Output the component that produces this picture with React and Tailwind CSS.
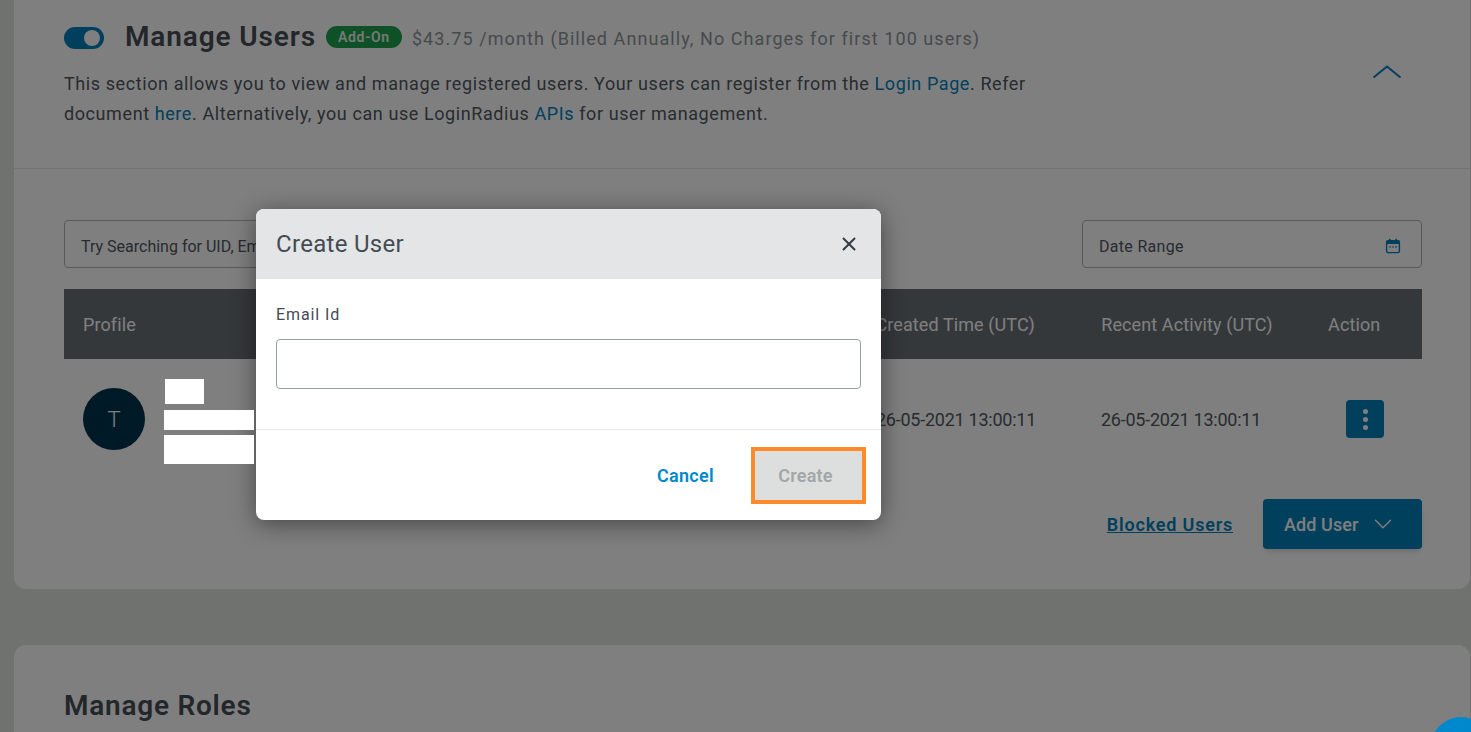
import React from 'react';
import { ChevronDown, X } from 'lucide-react';

const columns = [
  { label: 'Profile', width: 'w-[793px]' },
  { label: 'Created Time (UTC)', width: 'w-[226px]' },
  { label: 'Recent Activity (UTC)', width: 'w-[227px]' },
  { label: 'Action', width: 'w-[94px]' },
];

const CalendarIcon = () => (
  <svg width="16" height="16" viewBox="0 0 16 16" fill="none" className="mt-[4px] text-[#0080bb]">
    <rect x="1.6" y="2.6" width="12.8" height="12" rx="1.5" stroke="currentColor" strokeWidth="1.4" />
    <rect x="1.6" y="2.6" width="12.8" height="3.4" fill="currentColor" />
    <rect x="4" y="0.8" width="1.6" height="3" fill="currentColor" />
    <rect x="10.4" y="0.8" width="1.6" height="3" fill="currentColor" />
    <rect x="4.4" y="8.2" width="1.4" height="1.4" fill="currentColor" />
    <rect x="7.3" y="8.2" width="1.4" height="1.4" fill="currentColor" />
    <rect x="10.2" y="8.2" width="1.4" height="1.4" fill="currentColor" />
  </svg>
);

const UsersCard = () => (
  <div className="h-[589px] rounded-b-xl bg-white">
    <div className="h-[169px] border-b border-[#e6e6e6] pl-[50px] pr-[68px] pt-[20px]">
      <div className="flex h-[34px] items-center">
        <div className="mt-[2px] flex h-[22px] w-[40px] items-center justify-end rounded-full bg-[#0080bb] pr-[4px]">
          <span className="h-[16px] w-[16px] rounded-full bg-white" />
        </div>
        <h2 className="ml-[21px] text-[28px] font-semibold tracking-[0.87px] text-[#464e56]">Manage Users</h2>
        <span className="ml-[10px] flex h-[22px] w-[76px] items-center justify-center rounded-full bg-[#1ca34c] text-[14px] font-semibold tracking-[0.7px] text-[#f0f0f0]">
          Add-On
        </span>
        <span className="ml-[10px] mt-[2px] text-[18px] tracking-[1.07px] text-[#8f959a]">
          $43.75 /month (Billed Annually, No Charges for first 100 users)
        </span>
      </div>
      <div className="mt-[15px] flex justify-between">
        <p className="w-[980px] text-[18px] leading-[30px] tracking-[0.59px] text-[#50585f]">
          This section allows you to view and manage registered users. Your users can register from the{' '}
          <a className="text-[#0080bb]">Login Page</a>. Refer document <a className="text-[#0080bb]">here</a>.
          Alternatively, you can use LoginRadius <a className="text-[#0080bb]">APIs</a> for user management.
        </p>
        <svg width="30" height="14" viewBox="0 0 30 14" fill="none" className="mt-[-4px] text-[#0080bb]">
          <polyline points="1.5,12.5 15,1.5 28.5,12.5" stroke="currentColor" strokeWidth="2" />
        </svg>
      </div>
    </div>

    <div className="pl-[50px] pr-[48px] pt-[51px]">
      <div className="flex h-[48px] justify-between">
        <div className="flex w-[600px] items-center rounded border border-[#b5b5b5] pl-[16px] pt-[5px] text-[16px] text-[#50585f]">
          Try Searching for UID, Email, Name
        </div>
        <div className="flex w-[340px] items-center justify-between rounded border border-[#b5b5b5] pl-[16px] pr-[20px] text-[16px] tracking-[0.3px] text-[#50585f]">
          <span className="pt-[5px]">Date Range</span>
          <CalendarIcon />
        </div>
      </div>

      <div className="mt-[21px] flex h-[70px] items-center bg-[#6a7076] pl-[19px] text-[18px] tracking-[0.1px] text-white">
        {columns.map((col) => (
          <div key={col.label} className={col.width}>
            {col.label}
          </div>
        ))}
      </div>

      <div className="flex h-[120px] items-center pl-[19px] text-[18px] tracking-[-0.25px] text-[#50585f]">
        <div className="flex w-[793px] items-center">
          <div className="flex h-[62px] w-[62px] items-center justify-center rounded-full bg-[#00324d] text-[22px] font-light text-white">
            T
          </div>
        </div>
        <div className="w-[225px]">26-05-2021 13:00:11</div>
        <div className="w-[245px]">26-05-2021 13:00:11</div>
        <div className="flex h-[38px] w-[38px] items-center justify-center rounded bg-[#0080bb]">
          <span className="flex flex-col gap-[3px]">
            <span className="h-[5px] w-[5px] rounded-full bg-white" />
            <span className="h-[5px] w-[5px] rounded-full bg-white" />
            <span className="h-[5px] w-[5px] rounded-full bg-white" />
          </span>
        </div>
      </div>

      <div className="mt-[20px] flex items-center justify-end">
        <a className="text-[18px] font-semibold tracking-[0.8px] text-[#0080bb] underline">Blocked Users</a>
        <button className="ml-[30px] flex h-[50px] w-[159px] items-center rounded bg-[#0080bb] pl-[21px] text-[18px] font-medium tracking-[0.1px] text-white shadow-md">
          Add User
          <ChevronDown size={30} strokeWidth={1.1} className="ml-[9px]" />
        </button>
      </div>
    </div>
  </div>
);

const CreateUserDialog = () => (
  <div className="w-[625px] overflow-hidden rounded-lg bg-white shadow-[0_4px_24px_rgba(0,0,0,0.45)]">
    <div className="flex h-[70px] items-center justify-between bg-[#e4e5e7] pl-[20px] pr-[21px]">
      <h3 className="text-[24px] tracking-[0.3px] text-[#434c53]">Create User</h3>
      <X size={22} strokeWidth={2.2} className="text-[#333b42]" />
    </div>
    <div className="h-[151px] border-b border-[#e6e6e6] px-[20px] pt-[26px]">
      <label className="block text-[16px] leading-[20px] tracking-[0.9px] text-[#434c53]">Email Id</label>
      <div className="mt-[14px] h-[50px] rounded border border-[#9aa0a5]" />
    </div>
    <div className="flex h-[90px] items-center justify-end pr-[15px]">
      <button className="text-[18px] font-semibold tracking-[0.3px] text-[#0088cc]">Cancel</button>
      <button className="ml-[37px] h-[57px] w-[115px] border-[4px] border-[#ff8a2b] bg-[#dddfdf] pr-[6px] text-[18px] font-semibold tracking-[0.2px] text-[#a3a6a8]">
        Create
      </button>
    </div>
  </div>
);

export default function App() {
  return (
    <div className="relative h-[732px] overflow-hidden bg-[#e0e4e0] pl-[14px] pr-[1px] font-['Roboto',sans-serif]">
      <UsersCard />
      <div className="mt-[56px] h-[200px] rounded-t-xl bg-white pl-[50px] pt-[40px]">
        <h2 className="text-[28px] font-semibold tracking-[0.75px] text-[#464e56]">Manage Roles</h2>
      </div>

      <div className="absolute inset-0 bg-black/50 pl-[256px] pt-[209px]">
        <CreateUserDialog />
      </div>
      {/* redacted user details sit over the backdrop */}
      <div className="absolute left-[164px] top-[379px] flex w-[90px] flex-col items-start">
        <span className="ml-[1px] h-[25px] w-[39px] bg-white" />
        <span className="mt-[6px] h-[20px] w-[90px] bg-white" />
        <span className="mt-[5px] h-[29px] w-[90px] bg-white" />
      </div>
      <div className="absolute left-[1431px] top-[717px] h-[60px] w-[60px] rounded-full bg-[#0088cc]" />
    </div>
  );
}
